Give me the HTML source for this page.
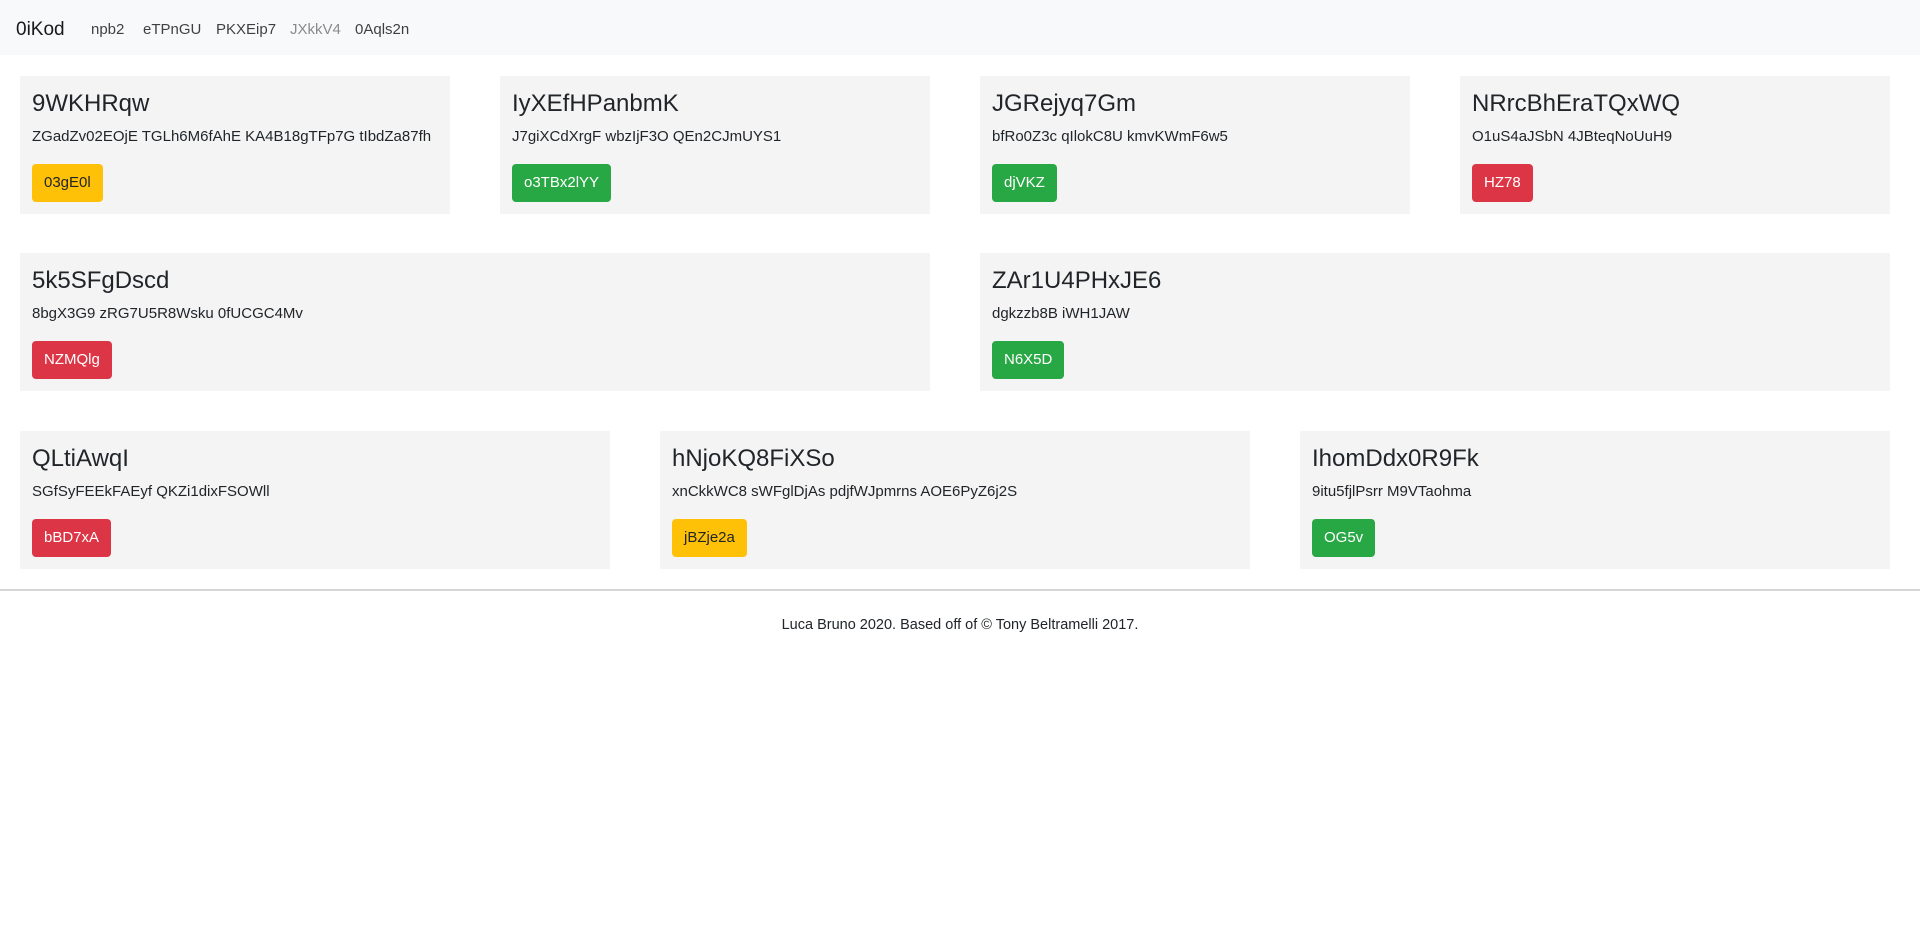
<!DOCTYPE html>
<html><head><meta charset="utf-8"><style>
*{box-sizing:border-box;margin:0;padding:0}
body{width:1920px;height:925px;background:#fff;font-family:"Liberation Sans",sans-serif;color:#212529;position:relative;overflow:hidden}
.nav{position:absolute;left:0;top:0;width:1920px;height:55px;background:#f8f9fa}
.nav span{position:absolute;top:2px;line-height:55px;font-size:15px;color:rgba(0,0,0,.75)}
.nav .brand{font-size:19px;color:rgba(0,0,0,.9)}
.card{position:absolute;background:#f4f4f4;height:138px}
.card h3{position:absolute;left:12px;top:11px;font-size:24px;line-height:34px;font-weight:500;white-space:nowrap}
.card p{position:absolute;left:12px;top:51px;font-size:15px;line-height:20px;white-space:nowrap}
.btn{position:absolute;left:12px;top:88px;height:38px;line-height:38px;padding:0 12px;border-radius:4px;font-size:15px;color:#fff}
.y{background:#ffc107;color:#212529}.g{background:#28a745}.r{background:#dc3545}
hr{position:absolute;left:0;top:589px;width:1920px;border:0;border-top:2px solid #d6d6d6}
.foot{position:absolute;top:614px;left:0;width:1920px;text-align:center;font-size:14.5px;line-height:22px}
</style></head><body>
<div class="nav">
<span class="brand" style="left:16px">0iKod</span>
<span style="left:91px">npb2</span>
<span style="left:143px">eTPnGU</span>
<span style="left:216px">PKXEip7</span>
<span style="left:290px;color:rgba(0,0,0,.45)">JXkkV4</span>
<span style="left:355px">0Aqls2n</span>
</div>

<div class="card" style="left:20px;top:76px;width:430px"><h3>9WKHRqw</h3><p>ZGadZv02EOjE TGLh6M6fAhE KA4B18gTFp7G tIbdZa87fh</p><span class="btn y">03gE0l</span></div>
<div class="card" style="left:500px;top:76px;width:430px"><h3>IyXEfHPanbmK</h3><p>J7giXCdXrgF wbzIjF3O QEn2CJmUYS1</p><span class="btn g">o3TBx2lYY</span></div>
<div class="card" style="left:980px;top:76px;width:430px"><h3>JGRejyq7Gm</h3><p>bfRo0Z3c qIlokC8U kmvKWmF6w5</p><span class="btn g">djVKZ</span></div>
<div class="card" style="left:1460px;top:76px;width:430px"><h3>NRrcBhEraTQxWQ</h3><p>O1uS4aJSbN 4JBteqNoUuH9</p><span class="btn r">HZ78</span></div>

<div class="card" style="left:20px;top:253px;width:910px"><h3>5k5SFgDscd</h3><p>8bgX3G9 zRG7U5R8Wsku 0fUCGC4Mv</p><span class="btn r">NZMQlg</span></div>
<div class="card" style="left:980px;top:253px;width:910px"><h3>ZAr1U4PHxJE6</h3><p>dgkzzb8B iWH1JAW</p><span class="btn g">N6X5D</span></div>

<div class="card" style="left:20px;top:431px;width:590px"><h3>QLtiAwqI</h3><p>SGfSyFEEkFAEyf QKZi1dixFSOWll</p><span class="btn r">bBD7xA</span></div>
<div class="card" style="left:660px;top:431px;width:590px"><h3>hNjoKQ8FiXSo</h3><p>xnCkkWC8 sWFglDjAs pdjfWJpmrns AOE6PyZ6j2S</p><span class="btn y">jBZje2a</span></div>
<div class="card" style="left:1300px;top:431px;width:590px"><h3>IhomDdx0R9Fk</h3><p>9itu5fjlPsrr M9VTaohma</p><span class="btn g">OG5v</span></div>

<hr>
<div class="foot">Luca Bruno 2020. Based off of © Tony Beltramelli 2017.</div>
</body></html>
